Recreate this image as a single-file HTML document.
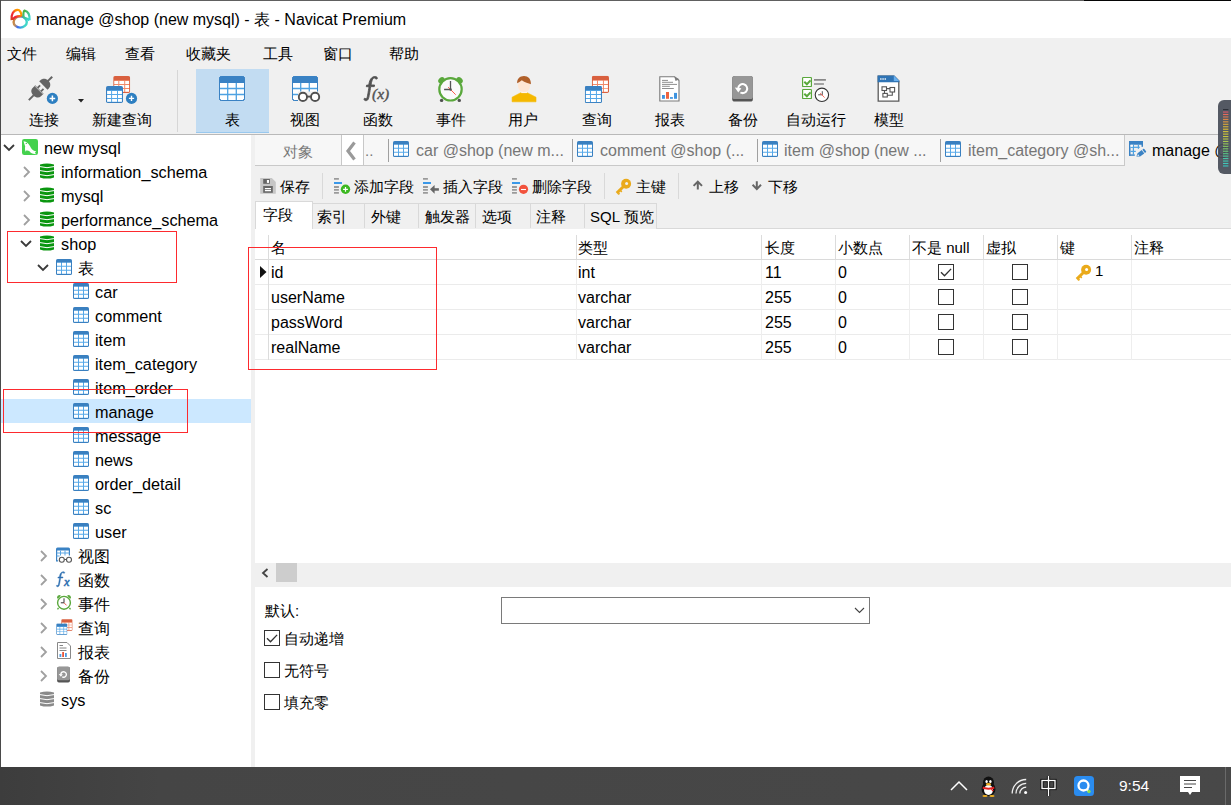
<!DOCTYPE html>
<html><head><meta charset="utf-8">
<style>
*{box-sizing:border-box;margin:0;padding:0}
html,body{width:1231px;height:805px;overflow:hidden;background:#f0f0f0;font-family:"Liberation Sans",sans-serif;font-size:16px;color:#000;position:relative}
.a{position:absolute;white-space:nowrap}
svg{position:absolute;overflow:visible}
.mi{position:absolute;top:43px;font-size:15px;line-height:20px}
.tl{position:absolute;top:109px;font-size:15px;line-height:20px;width:90px;text-align:center}
.tr{position:absolute;font-size:16.25px;line-height:22px;white-space:nowrap}
.t2{position:absolute;top:176px;font-size:15px;line-height:20px;white-space:nowrap}
.st{position:absolute;font-size:15px;line-height:20px;white-space:nowrap}
.gh{position:absolute;top:237px;font-size:15px;line-height:20px;white-space:nowrap}
.gc{position:absolute;font-size:16px;line-height:20px;white-space:nowrap}
.mi,.tl,.t2,.st,.gh,.gc{margin-top:1px}
.tr{margin-top:.5px}
.cb{position:absolute;width:16px;height:16px;border:1px solid #333;background:#fff}
</style></head><body>
<svg width="0" height="0" style="position:absolute">
<defs>
<symbol id="tbl" viewBox="0 0 26 25">
<rect x="0.5" y="0.5" width="25" height="24" rx="2" fill="#fff" stroke="#3a82c4"/>
<path d="M0.5 2.5a2 2 0 0 1 2-2h21a2 2 0 0 1 2 2V7H0.5z" fill="#3a82c4"/>
<path d="M8.7 7v17.5M17.3 7v17.5M0.5 12.5h25M0.5 18.5h25" stroke="#4ea2e2" stroke-width="1.3" fill="none"/>
<rect x="0.5" y="0.5" width="25" height="24" rx="2" fill="none" stroke="#3a82c4"/>
</symbol>
<symbol id="tblr" viewBox="0 0 26 25">
<rect x="0.5" y="0.5" width="25" height="24" rx="2" fill="#fff" stroke="#d9603f"/>
<path d="M0.5 2.5a2 2 0 0 1 2-2h21a2 2 0 0 1 2 2V7H0.5z" fill="#d9603f"/>
<path d="M8.7 7v17.5M17.3 7v17.5M0.5 12.5h25M0.5 18.5h25" stroke="#e5826a" stroke-width="1.3" fill="none"/>
<rect x="0.5" y="0.5" width="25" height="24" rx="2" fill="none" stroke="#d9603f"/>
</symbol>
<symbol id="tbs" viewBox="0 0 16 16">
<rect x="0" y="0" width="16" height="16" rx="1.6" fill="#3a80c0"/>
<rect x="1" y="3.6" width="14" height="11.3" fill="#56a8e8"/>
<path d="M1 3.7h4v3H1zM6 3.7h4v3H6zM11 3.7h4v3h-4zM1 7.8h4v3H1zM6 7.8h4v3H6zM11 7.8h4v3h-4zM1 11.8h4v3H1zM6 11.8h4v3H6zM11 11.8h4v3h-4z" fill="#fff"/>
</symbol>
<symbol id="tbm" viewBox="0 0 17 17">
<rect x="0" y="0" width="17" height="17" rx="1.8" fill="#3a80c0"/>
<rect x="1" y="4.2" width="15" height="11.8" fill="#56a8e8"/>
<path d="M1.1 5H5.1V8H1.1zM1.1 9H5.1V12H1.1zM1.1 12.9H5.1V15.8H1.1zM6.1 5H11V8H6.1zM6.1 9H11V12H6.1zM6.1 12.9H11V15.8H6.1zM12 5H15.9V8H12zM12 9H15.9V12H12zM12 12.9H15.9V15.8H12z" fill="#fff"/>
</symbol>
<symbol id="tbmr" viewBox="0 0 17 17">
<rect x="0" y="0" width="17" height="17" rx="1.8" fill="#d9603f"/>
<rect x="1" y="4.2" width="15" height="11.8" fill="#f08a6a"/>
<path d="M1.1 5H5.1V8H1.1zM1.1 9H5.1V12H1.1zM1.1 12.9H5.1V15.8H1.1zM6.1 5H11V8H6.1zM6.1 9H11V12H6.1zM6.1 12.9H11V15.8H6.1zM12 5H15.9V8H12zM12 9H15.9V12H12zM12 12.9H15.9V15.8H12z" fill="#fff"/>
</symbol>
<symbol id="db" viewBox="0 0 14 16">
<path d="M0 1.6Q7 -.8 14 1.6V14.4Q7 16.8 0 14.4z" fill="#0a960f"/>
<path d="M0 3.6Q7 5.8 14 3.6M0 7.6Q7 9.8 14 7.6M0 11.6Q7 13.8 14 11.6" fill="none" stroke="#fff" stroke-width="1"/>
</symbol>
</defs>
</svg>

<!-- title bar -->
<div class="a" style="left:0;top:0;width:1231px;height:38px;background:#fff"></div>
<div class="a" style="left:0;top:0;width:1084px;height:1px;background:#606060"></div>
<div class="a" style="left:1084px;top:0;width:147px;height:1px;background:#050505"></div>
<div class="a" style="left:0;top:0;width:1px;height:767px;background:#4a4a4a"></div>
<svg style="left:8px;top:7px" width="25" height="25" viewBox="0 0 25 25">
<defs>
<linearGradient id="lgL" x1="0" y1="1" x2="1" y2="0"><stop offset="0" stop-color="#d8401a"/><stop offset="0.35" stop-color="#f0203c"/><stop offset="0.7" stop-color="#ff8a00"/><stop offset="1" stop-color="#ffb000"/></linearGradient>
<linearGradient id="lgR" x1="0" y1="0" x2="0.6" y2="1"><stop offset="0" stop-color="#4aae3a"/><stop offset="1" stop-color="#3cd8d0"/></linearGradient>
<linearGradient id="lgB" x1="0" y1="0" x2="1" y2="0.3"><stop offset="0" stop-color="#d08030"/><stop offset="0.3" stop-color="#c09060"/><stop offset="0.55" stop-color="#3a6af8"/><stop offset="1" stop-color="#40d8c8"/></linearGradient>
</defs>
<ellipse cx="12.2" cy="15" rx="6.6" ry="5.6" fill="none" stroke="url(#lgB)" stroke-width="2.4"/>
<path d="M3.6 13.2C2.8 7.5 5.5 3 9.5 2.8c2.6-.1 3.8 2.5 4.2 6.6M13.6 9.2C9.5 8.8 6 10 4.4 12.8" fill="none" stroke="url(#lgL)" stroke-width="2.2" stroke-linejoin="round"/>
<path d="M15.6 10.8C15.2 6.5 15.8 4 16.6 3.6c3 .6 5.2 4 5 9.6M15.8 10.6c2.2.6 4.2 1.4 5.6 2.8" fill="none" stroke="url(#lgR)" stroke-width="2.2" stroke-linejoin="round"/>
</svg>
<div class="a" style="left:36px;top:9px;font-size:16px;line-height:22px">manage @shop (new mysql) - 表 - Navicat Premium</div>

<!-- menu -->
<div class="mi" style="left:7px">文件</div>
<div class="mi" style="left:66px">编辑</div>
<div class="mi" style="left:125px">查看</div>
<div class="mi" style="left:186px">收藏夹</div>
<div class="mi" style="left:263px">工具</div>
<div class="mi" style="left:323px">窗口</div>
<div class="mi" style="left:389px">帮助</div>

<!-- toolbar -->
<div class="a" style="left:196px;top:69px;width:73px;height:64px;background:#c2dcf2;border-bottom:1px solid #99c8ee"></div>
<div class="a" style="left:177px;top:70px;width:1px;height:62px;background:#d6d6d6"></div>
<div class="a" style="left:1px;top:134px;width:1230px;height:1px;background:#b9b9b9"></div>

<!-- connect icon -->
<svg style="left:24px;top:72px" width="40" height="36" viewBox="0 0 40 36">
<g transform="translate(17.4 15.5) rotate(-45)" fill="#646464">
<path d="M-2.8 -5.9V5.9H-6.5C-9.5 5.9 -11.2 3.5 -11.2 0S-9.5 -5.9 -6.5 -5.9z"/>
<rect x="-17.8" y="-1" width="7" height="2"/>
<rect x="-3" y="-3.3" width="3.6" height="1.8"/>
<rect x="-3" y="1.5" width="3.6" height="1.8"/>
<path d="M-3.6 -5.9v11.8" stroke="#f0f0f0" stroke-width="0.6"/>
<path d="M2.8 -5.9V5.9H4.5C7.5 5.9 9.8 3.5 9.8 0S7.5 -5.9 4.5 -5.9z"/>
<rect x="9" y="-1" width="6.3" height="2"/>
</g>
<circle cx="28.4" cy="26.4" r="5.6" fill="#2d7fc1"/>
<path d="M28.4 23.6v5.6M25.6 26.4h5.6" stroke="#fff" stroke-width="1.5"/>
</svg>
<svg style="left:78px;top:99px" width="6" height="4" viewBox="0 0 6 4"><path d="M0 0h6L3 3.5z" fill="#222"/></svg>

<!-- new query icon -->
<svg style="left:100px;top:72px" width="45" height="36" viewBox="0 0 45 36">
<use href="#tbmr" x="13.2" y="4" width="17" height="17"/>
<use href="#tbm" x="6" y="14" width="17" height="17"/>
<circle cx="31.5" cy="26.4" r="5.6" fill="#2d7fc1"/>
<path d="M31.5 23.8v5.2M28.9 26.4h5.2" stroke="#fff" stroke-width="1.4"/>
</svg>

<!-- table icon -->
<svg style="left:219px;top:76px" width="26" height="25"><use href="#tbl" width="26" height="25"/></svg>
<!-- view icon -->
<svg style="left:292px;top:76px" width="30" height="28" viewBox="0 0 30 28">
<use href="#tbl" width="26" height="25"/>
<rect x="6" y="15.5" width="23" height="12" fill="#f0f0f0"/>
<rect x="6" y="15.5" width="0" height="0" fill="#fff"/>
<circle cx="10.9" cy="20.9" r="4.1" fill="#fff" stroke="#505050" stroke-width="1.9"/>
<circle cx="23.1" cy="20.9" r="4.1" fill="#fff" stroke="#505050" stroke-width="1.9"/>
<path d="M15 20.6h4" stroke="#505050" stroke-width="1.9"/>
</svg>
<!-- function icon -->
<svg style="left:362px;top:75px" width="32" height="28" viewBox="0 0 32 28">
<path d="M2.5 25.2c1.3.9 3 .5 3.8-1.2.8-1.8 1.6-7 2.4-12.4h3.6l.3-1.6H9C9.6 6.8 10.3 4 11.5 3.2c.8-.5 1.4-.2 2 .5.7.6 1.8.4 1.9-.5.1-1-1.2-1.8-2.6-1.7-2.3.1-4.1 1.8-5 4.2-.5 1.2-.8 2.8-1.1 4.4H4.6l-.3 1.6h2.7C6.2 16.8 5.5 21.6 4.9 23c-.3.7-.8.9-1.3.6-.6-.5-1.6-.4-1.6.5 0 .3.2.8.5 1.1z" fill="#525252" stroke="#525252" stroke-width="0.9"/>
<text x="10" y="23.5" font-family="Liberation Serif" font-style="italic" font-size="15.5" fill="#525252" stroke="#525252" stroke-width="0.4">(x)</text>
</svg>
<!-- event clock -->
<svg style="left:434px;top:73px" width="32" height="32" viewBox="0 0 32 32">
<ellipse cx="7.4" cy="7.2" rx="3.6" ry="2.6" transform="rotate(-45 7.4 7.2)" fill="#5aa83c"/>
<ellipse cx="25.6" cy="7.2" rx="3.6" ry="2.6" transform="rotate(45 25.6 7.2)" fill="#5aa83c"/>
<circle cx="7.6" cy="27.4" r="1.7" fill="#505050"/>
<circle cx="25.3" cy="27.4" r="1.7" fill="#505050"/>
<circle cx="16.5" cy="16.3" r="11.2" fill="#fafafa" stroke="#5aa83c" stroke-width="2.2"/>
<path d="M16.5 8v8.5H10.1" stroke="#555" stroke-width="1.3" fill="none"/>
<path d="M14.1 14.1l7.6 7.6" stroke="#ff5a4a" stroke-width="1"/>
<circle cx="16.6" cy="16.5" r="1.2" fill="#555"/>
</svg>
<!-- user -->
<svg style="left:511px;top:75px" width="26" height="28" viewBox="0 0 26 28">
<path d="M1.1 22.2L9.8 17.7h6.3l8.9 4.5v4.6H1.1z" fill="#f5b800" stroke="#f5b800" stroke-width="0.6" stroke-linejoin="round"/>
<rect x="10.2" y="15.5" width="5.9" height="2.6" fill="#fff4ea"/>
<ellipse cx="13" cy="10.6" rx="6.1" ry="6.4" fill="#fee6d4"/>
<path d="M6.2 8.2C5.8 3.8 9 1 13 1s7.2 2.8 6.9 8.2C17.5 8.6 13.8 7.6 10.8 5.3 9.2 6.6 7.7 7.6 6.2 8.2z" fill="#b0602a"/>
</svg>
<!-- query -->
<svg style="left:584px;top:75px" width="26" height="29" viewBox="0 0 26 29">
<use href="#tbmr" x="7.8" y="0.8" width="17.2" height="17.2"/>
<use href="#tbm" x="0.8" y="10.9" width="17.2" height="17.2"/>
</svg>
<!-- report -->
<svg style="left:658px;top:75px" width="23" height="28" viewBox="0 0 23 28">
<path d="M1.8 1.7H16.6L21 5.6V26H1.8z" fill="#fff" stroke="#7a7a7a" stroke-width="1.1"/>
<path d="M16.2 1.4L21.4 4.2 17.6 5.9z" fill="#7a7a7a"/>
<path d="M4 5.4h6M4 7.3h11M4 9.4h15M4 11.3h7.8M4 13.5h11.8" stroke="#7a7a7a" stroke-width="0.85"/>
<rect x="4" y="20" width="2.9" height="3.8" fill="#3f94e0"/>
<rect x="8" y="17" width="3" height="6.8" fill="#ee6440"/>
<rect x="12" y="22.1" width="2.9" height="1.7" fill="#3f94e0"/>
<rect x="16" y="17.9" width="3" height="5.9" fill="#3f94e0"/>
</svg>
<!-- backup -->
<svg style="left:732px;top:75px" width="21" height="28" viewBox="0 0 21 28">
<rect x="0.2" y="1" width="20.7" height="25.6" rx="2.6" fill="#555"/>
<rect x="0.2" y="1" width="20.7" height="23" rx="2.6" fill="#979797"/>
<path d="M6.2 13A4.5 4.5 0 1 1 8.4 17.5" fill="none" stroke="#fff" stroke-width="2"/>
<path d="M2.8 12.6l6.6.6-3.1 4.2z" fill="#fff"/>
</svg>
<!-- automation -->
<svg style="left:802px;top:77px" width="28" height="27" viewBox="0 0 28 27">
<rect x=".6" y=".5" width="8.8" height="9" rx=".6" fill="#fff" stroke="#5aa83c" stroke-width="1.2"/>
<path d="M2.3 4.7l2.6 2.6 3.6-3.9" stroke="#5aa83c" stroke-width="2" fill="none"/>
<rect x=".6" y="12.5" width="8.8" height="9" rx=".6" fill="#fff" stroke="#5aa83c" stroke-width="1.2"/>
<path d="M2.3 16.7l2.6 2.6 3.6-3.9" stroke="#5aa83c" stroke-width="2" fill="none"/>
<path d="M12 2.9h11.9M12 7h9.9" stroke="#888" stroke-width="1.7"/>
<circle cx="19.9" cy="17.8" r="6.7" fill="#fff" stroke="#333" stroke-width="1.1"/>
<path d="M20.3 14.2v3.6H16.2" stroke="#444" stroke-width="0.9" fill="none"/>
<path d="M18.2 16.1l4.4 4.5" stroke="#ff5a4a" stroke-width="0.9"/>
</svg>
<!-- model -->
<svg style="left:877px;top:75px" width="23" height="28" viewBox="0 0 23 28">
<path d="M1.2 1.2h15.8l4.8 4.8v20.2H1.2z" fill="#fff" stroke="#5a5a5a" stroke-width="1.3"/>
<path d="M.6 .6h16.6l5.2 5.2V7.2H.6z" fill="#2f74b5"/>
<path d="M16.8 .6v5.4h5.4z" fill="#6ab0ee"/>
<path d="M3.2 4h1.3M5.4 4h1.3M7.6 4h1.3" stroke="#fff" stroke-width="1.3"/>
<rect x="5" y="11.8" width="4.5" height="3.7" fill="none" stroke="#555" stroke-width="1.1"/>
<rect x="13" y="12.5" width="4.6" height="4.5" fill="none" stroke="#555" stroke-width="1.1"/>
<rect x="5.9" y="18.4" width="4.4" height="3.6" fill="none" stroke="#555" stroke-width="1.1"/>
<path d="M9.5 13.6H13M15.3 17v3.2h-5M7.5 15.5v2.9" stroke="#555" stroke-width="1.1" fill="none"/>
</svg>

<div class="tl" style="left:-1px">连接</div>
<div class="tl" style="left:77px">新建查询</div>
<div class="tl" style="left:187px">表</div>
<div class="tl" style="left:260px">视图</div>
<div class="tl" style="left:333px">函数</div>
<div class="tl" style="left:406px">事件</div>
<div class="tl" style="left:478px">用户</div>
<div class="tl" style="left:552px">查询</div>
<div class="tl" style="left:625px">报表</div>
<div class="tl" style="left:698px">备份</div>
<div class="tl" style="left:771px">自动运行</div>
<div class="tl" style="left:844px">模型</div>
<!-- left panel -->
<div class="a" style="left:1px;top:135px;width:250px;height:632px;background:#fff"></div>
<div class="a" style="left:251px;top:135px;width:4px;height:632px;background:#f0f0f0"></div>
<div class="a" style="left:1px;top:399px;width:250px;height:24px;background:#cce8ff"></div>

<!-- chevrons -->
<svg style="left:3px;top:144px" width="12" height="8" viewBox="0 0 12 8"><path d="M1 1l5 5 5-5" fill="none" stroke="#3a3a3a" stroke-width="1.8"/></svg>
<svg style="left:23px;top:166px" width="8" height="12" viewBox="0 0 8 12"><path d="M1 1l5 5-5 5" fill="none" stroke="#a0a0a0" stroke-width="1.8"/></svg>
<svg style="left:23px;top:190px" width="8" height="12" viewBox="0 0 8 12"><path d="M1 1l5 5-5 5" fill="none" stroke="#a0a0a0" stroke-width="1.8"/></svg>
<svg style="left:23px;top:214px" width="8" height="12" viewBox="0 0 8 12"><path d="M1 1l5 5-5 5" fill="none" stroke="#a0a0a0" stroke-width="1.8"/></svg>
<svg style="left:20px;top:240px" width="12" height="8" viewBox="0 0 12 8"><path d="M1 1l5 5 5-5" fill="none" stroke="#3a3a3a" stroke-width="1.8"/></svg>
<svg style="left:37px;top:264px" width="12" height="8" viewBox="0 0 12 8"><path d="M1 1l5 5 5-5" fill="none" stroke="#3a3a3a" stroke-width="1.8"/></svg>
<svg style="left:40px;top:550px" width="8" height="12" viewBox="0 0 8 12"><path d="M1 1l5 5-5 5" fill="none" stroke="#a0a0a0" stroke-width="1.8"/></svg>
<svg style="left:40px;top:574px" width="8" height="12" viewBox="0 0 8 12"><path d="M1 1l5 5-5 5" fill="none" stroke="#a0a0a0" stroke-width="1.8"/></svg>
<svg style="left:40px;top:598px" width="8" height="12" viewBox="0 0 8 12"><path d="M1 1l5 5-5 5" fill="none" stroke="#a0a0a0" stroke-width="1.8"/></svg>
<svg style="left:40px;top:622px" width="8" height="12" viewBox="0 0 8 12"><path d="M1 1l5 5-5 5" fill="none" stroke="#a0a0a0" stroke-width="1.8"/></svg>
<svg style="left:40px;top:646px" width="8" height="12" viewBox="0 0 8 12"><path d="M1 1l5 5-5 5" fill="none" stroke="#a0a0a0" stroke-width="1.8"/></svg>
<svg style="left:40px;top:670px" width="8" height="12" viewBox="0 0 8 12"><path d="M1 1l5 5-5 5" fill="none" stroke="#a0a0a0" stroke-width="1.8"/></svg>

<!-- mysql conn icon -->
<svg style="left:22px;top:139px" width="16" height="16" viewBox="0 0 16 16">
<rect x="0" y="0" width="16" height="16" rx="2.2" fill="#44d14e"/>
<path d="M1.5 2.2C3 2.2 4.5 3 5.5 4 7 5 8 7 9 9c1 2 3 3 5.2 3.3L13 13.5l1 1.7c-2-.2-4-.7-5.5-1.7l-.7-1C6.5 11.5 5 11 3.8 11.8l-.3 1.2C3 11 2.8 9 3.2 7.5 2.5 5.5 2 4 1.5 2.2z" fill="#fff"/>
<circle cx="4.3" cy="4.4" r=".7" fill="#44d14e"/>
</svg>
<svg style="left:40px;top:163px" width="14" height="16"><use href="#db" width="14" height="16"/></svg>
<svg style="left:40px;top:187px" width="14" height="16"><use href="#db" width="14" height="16"/></svg>
<svg style="left:40px;top:211px" width="14" height="16"><use href="#db" width="14" height="16"/></svg>
<svg style="left:40px;top:235px" width="14" height="16"><use href="#db" width="14" height="16"/></svg>
<svg style="left:56px;top:259px" width="16" height="16"><use href="#tbs" width="16" height="16"/></svg>
<svg style="left:73px;top:283px" width="16" height="16"><use href="#tbs" width="16" height="16"/></svg>
<svg style="left:73px;top:307px" width="16" height="16"><use href="#tbs" width="16" height="16"/></svg>
<svg style="left:73px;top:331px" width="16" height="16"><use href="#tbs" width="16" height="16"/></svg>
<svg style="left:73px;top:355px" width="16" height="16"><use href="#tbs" width="16" height="16"/></svg>
<svg style="left:73px;top:379px" width="16" height="16"><use href="#tbs" width="16" height="16"/></svg>
<svg style="left:73px;top:403px" width="16" height="16"><use href="#tbs" width="16" height="16"/></svg>
<svg style="left:73px;top:427px" width="16" height="16"><use href="#tbs" width="16" height="16"/></svg>
<svg style="left:73px;top:451px" width="16" height="16"><use href="#tbs" width="16" height="16"/></svg>
<svg style="left:73px;top:475px" width="16" height="16"><use href="#tbs" width="16" height="16"/></svg>
<svg style="left:73px;top:499px" width="16" height="16"><use href="#tbs" width="16" height="16"/></svg>
<svg style="left:73px;top:523px" width="16" height="16"><use href="#tbs" width="16" height="16"/></svg>
<!-- 视图 small -->
<svg style="left:52px;top:544px" width="24" height="24" viewBox="0 0 24 24">
<rect x="4.5" y="3.2" width="13.5" height="12.8" fill="#fff"/>
<path d="M4 5a1.5 1.5 0 0 1 1.5-1.5h11A1.5 1.5 0 0 1 18 5v1.5H4z" fill="#3a82c4"/>
<path d="M4.6 6v10.8h1.5M17.4 6v5.5" stroke="#3a82c4" stroke-width="1.2" fill="none"/>
<path d="M8.5 6.5v5M13 6.5v5M4.6 9h12.8M4.6 12h3" stroke="#5aa6e4" stroke-width="1" fill="none"/>
<circle cx="9.8" cy="15.8" r="2.5" fill="#fff" stroke="#555" stroke-width="1.1"/>
<circle cx="17" cy="15.8" r="2.5" fill="#fff" stroke="#555" stroke-width="1.1"/>
<path d="M12.3 15.5h2.2" stroke="#555" stroke-width="1"/>
</svg>
<svg style="left:52px;top:568px" width="24" height="24" viewBox="0 0 24 24">
<g transform="translate(3.2 2.8) scale(0.62)">
<path d="M2.5 25.2c1.3.9 3 .5 3.8-1.2.8-1.8 1.6-7 2.4-12.4h3.6l.3-1.6H9C9.6 6.8 10.3 4 11.5 3.2c.8-.5 1.4-.2 2 .5.7.6 1.8.4 1.9-.5.1-1-1.2-1.8-2.6-1.7-2.3.1-4.1 1.8-5 4.2-.5 1.2-.8 2.8-1.1 4.4H4.6l-.3 1.6h2.7C6.2 16.8 5.5 21.6 4.9 23c-.3.7-.8.9-1.3.6-.6-.5-1.6-.4-1.6.5 0 .3.2.8.5 1.1z" fill="#2f70b2" stroke="#2f70b2" stroke-width="0.8"/>
</g>
<text x="12" y="18.2" font-family="Liberation Serif" font-style="italic" font-size="12.5" fill="#2f70b2" stroke="#2f70b2" stroke-width="0.5">x</text>
</svg>
<svg style="left:56px;top:594px" width="16" height="17" viewBox="0 0 16 17">
<path d="M1 4a3 3 0 0 1 3-3l.8.8-3 3z" fill="#5aa83c"/>
<path d="M15 4a3 3 0 0 0-3-3l-.8.8 3 3z" fill="#5aa83c"/>
<circle cx="8" cy="8.8" r="6.4" fill="#fff" stroke="#5aa83c" stroke-width="1.4"/>
<path d="M2.5 14l-1 1.4M13.5 14l1 1.4" stroke="#5aa83c" stroke-width="1.3"/>
<path d="M8 4.3v4.5H4.8" stroke="#333" stroke-width="1" fill="none"/><path d="M8 8.8l2.6 2.6" stroke="#e84a3a" stroke-width="0.9"/>
</svg>
<svg style="left:56px;top:618px" width="17" height="18" viewBox="0 0 17 18">
<use href="#tbmr" x="5.2" y="1" width="11.4" height="12"/>
<use href="#tbm" x="0.2" y="5.2" width="11.2" height="12"/>
</svg>
<svg style="left:57px;top:642px" width="14" height="17" viewBox="0 0 14 17">
<path d="M.5 .5h9.5l3.5 3.5v12.5H.5z" fill="#fff" stroke="#888" stroke-width="1"/>
<path d="M2.5 3.5h3.5M2.5 6h7M2.5 8.5h7" stroke="#777" stroke-width=".9"/>
<rect x="2.5" y="12" width="1.8" height="3" fill="#4a9ae0"/>
<rect x="5.2" y="10" width="1.8" height="5" fill="#e8553a"/>
<rect x="8" y="11" width="1.8" height="4" fill="#4a9ae0"/>
</svg>
<svg style="left:57px;top:666px" width="13" height="17.5" viewBox="0 0 21 28">
<rect x="0.2" y="1" width="20.7" height="25.6" rx="2.8" fill="#555"/>
<rect x="0.2" y="1" width="20.7" height="22" rx="2.8" fill="#979797"/>
<path d="M6.2 13A4.5 4.5 0 1 1 8.4 17.5" fill="none" stroke="#fff" stroke-width="2.2"/>
<path d="M2.8 12.6l6.6.6-3.1 4.2z" fill="#fff"/>
</svg>
<svg style="left:40px;top:691px" width="14" height="16" viewBox="0 0 14 16">
<path d="M0 1.6Q7 -.8 14 1.6V14.4Q7 16.8 0 14.4z" fill="#8a8a8a"/>
<path d="M0 3.6Q7 5.8 14 3.6M0 7.6Q7 9.8 14 7.6M0 11.6Q7 13.8 14 11.6" fill="none" stroke="#fff" stroke-width="1"/>
</svg>

<div class="tr" style="left:44px;top:136px">new mysql</div>
<div class="tr" style="left:61px;top:160px">information_schema</div>
<div class="tr" style="left:61px;top:184px">mysql</div>
<div class="tr" style="left:61px;top:208px">performance_schema</div>
<div class="tr" style="left:61px;top:232px">shop</div>
<div class="tr" style="left:78px;top:256px">表</div>
<div class="tr" style="left:95px;top:280px">car</div>
<div class="tr" style="left:95px;top:304px">comment</div>
<div class="tr" style="left:95px;top:328px">item</div>
<div class="tr" style="left:95px;top:352px">item_category</div>
<div class="tr" style="left:95px;top:376px">item_order</div>
<div class="tr" style="left:95px;top:400px">manage</div>
<div class="tr" style="left:95px;top:424px">message</div>
<div class="tr" style="left:95px;top:448px">news</div>
<div class="tr" style="left:95px;top:472px">order_detail</div>
<div class="tr" style="left:95px;top:496px">sc</div>
<div class="tr" style="left:95px;top:520px">user</div>
<div class="tr" style="left:78px;top:544px">视图</div>
<div class="tr" style="left:78px;top:568px">函数</div>
<div class="tr" style="left:78px;top:592px">事件</div>
<div class="tr" style="left:78px;top:616px">查询</div>
<div class="tr" style="left:78px;top:640px">报表</div>
<div class="tr" style="left:78px;top:664px">备份</div>
<div class="tr" style="left:61px;top:688px">sys</div>

<!-- red rectangles -->
<div class="a" style="left:7px;top:231px;width:170px;height:52px;border:1px solid #fd2a2e"></div>
<div class="a" style="left:3px;top:389px;width:185px;height:44px;border:1px solid #fd2a2e"></div>
<!-- tab bar -->
<div class="a" style="left:255px;top:135px;width:870px;height:31px;background:#f7f7f7;border-bottom:1px solid #c9c9c9"></div>
<div class="a" style="left:341px;top:135px;width:23px;height:30px;background:#fff;border-left:1px solid #c8c8c8;border-right:1px solid #c8c8c8"></div>
<div class="a" style="left:1124px;top:135px;width:1px;height:31px;background:#c9c9c9"></div>
<div class="st" style="left:283px;top:141px;color:#777">对象</div>
<svg style="left:344px;top:140px" width="14" height="22" viewBox="0 0 14 22"><path d="M10.5 2.5L4 11l6.5 8.5" fill="none" stroke="#9a9a9a" stroke-width="3.2"/></svg>
<div class="st" style="left:365px;top:140px;color:#777">..</div>
<div class="a" style="left:388px;top:139px;width:1px;height:23px;background:#a0a0a0"></div>
<div class="a" style="left:572px;top:139px;width:1px;height:23px;background:#a0a0a0"></div>
<div class="a" style="left:757px;top:139px;width:1px;height:23px;background:#a0a0a0"></div>
<div class="a" style="left:940px;top:139px;width:1px;height:23px;background:#a0a0a0"></div>
<svg style="left:393px;top:141px" width="16" height="16"><use href="#tbs" width="16" height="16"/></svg>
<svg style="left:577px;top:141px" width="16" height="16"><use href="#tbs" width="16" height="16"/></svg>
<svg style="left:762px;top:141px" width="16" height="16"><use href="#tbs" width="16" height="16"/></svg>
<svg style="left:945px;top:141px" width="16" height="16"><use href="#tbs" width="16" height="16"/></svg>
<div class="tr" style="left:416px;top:139px;color:#767676;font-size:16px">car @shop (new m...</div>
<div class="tr" style="left:600px;top:139px;color:#767676;font-size:16px">comment @shop (...</div>
<div class="tr" style="left:784px;top:139px;color:#767676;font-size:16px">item @shop (new ...</div>
<div class="tr" style="left:968px;top:139px;color:#767676;font-size:16px">item_category @sh...</div>
<svg style="left:1126px;top:138px" width="22" height="22" viewBox="0 0 22 22">
<g fill="#3a82c4">
<rect x="3" y="3" width="14" height="3.8" rx=".8"/>
<rect x="3" y="3" width="1.5" height="14.8"/>
<rect x="3" y="16.4" width="5.8" height="1.4"/>
<rect x="15.5" y="3" width="1.5" height="5.8"/>
</g>
<g fill="#4ea2e2">
<rect x="6.8" y="6.8" width="1.2" height="10"/>
<rect x="11.8" y="6.8" width="1.2" height="4"/>
<rect x="4.5" y="8.7" width="9.3" height="1.2"/>
<rect x="4.5" y="12.8" width="5.3" height="1.2"/>
</g>
<rect x="4.5" y="6.8" width="2.3" height="1.9" fill="#fff"/>
<g transform="translate(10.4 18.6) rotate(-36.5)">
<path d="M0 0L3 -2.1H8.2V2.1H3z" fill="#3a82c4"/>
<path d="M1.2 0L2.8 -1V1z" fill="#fff"/>
<rect x="8.9" y="-2.1" width="2" height="4.2" rx=".6" fill="#3a82c4"/>
</g>
</svg>
<div class="tr" style="left:1152px;top:139px;font-size:16px">manage @shop</div>
<!-- volume meter widget -->
<div class="a" style="left:1218px;top:100px;width:16px;height:74px;background:rgba(72,77,88,0.93);border-radius:6px 0 0 6px"></div>
<svg style="left:1223px;top:109px" width="6" height="60" viewBox="0 0 6 60">
<g stroke-width="1.1"><path d="M0 0.60h5.4" stroke="#2a2e36"/><path d="M0 3.05h5.4" stroke="#e05a6a"/><path d="M0 5.50h5.4" stroke="#e86a5a"/><path d="M0 7.95h5.4" stroke="#e07a50"/><path d="M0 10.40h5.4" stroke="#e08a48"/><path d="M0 12.85h5.4" stroke="#e09a40"/><path d="M0 15.30h5.4" stroke="#d8a838"/><path d="M0 17.75h5.4" stroke="#d8b438"/><path d="M0 20.20h5.4" stroke="#e0c030"/><path d="M0 22.65h5.4" stroke="#d8c838"/><path d="M0 25.10h5.4" stroke="#d0c838"/><path d="M0 27.55h5.4" stroke="#c8c840"/><path d="M0 30.00h5.4" stroke="#b8c848"/><path d="M0 32.45h5.4" stroke="#a8c850"/><path d="M0 34.90h5.4" stroke="#98c858"/><path d="M0 37.35h5.4" stroke="#88c860"/><path d="M0 39.80h5.4" stroke="#78c868"/><path d="M0 42.25h5.4" stroke="#68c878"/><path d="M0 44.70h5.4" stroke="#58c888"/><path d="M0 47.15h5.4" stroke="#50c898"/><path d="M0 49.60h5.4" stroke="#48c8a8"/><path d="M0 52.05h5.4" stroke="#40c8b0"/><path d="M0 54.50h5.4" stroke="#40c8b8"/><path d="M0 56.95h5.4" stroke="#38c8c0"/></g>
</svg>

<!-- toolbar 2 -->
<svg style="left:256px;top:174px" width="25" height="24" viewBox="0 0 25 24">
<path d="M4.2 4H15.8L19.8 8V19.8H4.2z" fill="#c6c6c6"/>
<rect x="7.2" y="5" width="6.7" height="4.8" fill="#666"/>
<rect x="10.9" y="6" width="2.1" height="2.9" fill="#fff"/>
<rect x="7.2" y="12" width="9.6" height="6.8" fill="#666"/>
<path d="M8.9 14.6h6.1M8.9 16.7h6.1" stroke="#fff" stroke-width="1.2"/>
</svg>
<div class="t2" style="left:280px">保存</div>
<div class="a" style="left:322px;top:173px;width:1px;height:26px;background:#d9d9d9"></div>
<svg style="left:330px;top:174px" width="25" height="24" viewBox="0 0 25 24">
<path d="M4 4.9h4.9M4 13h4.9M4 15.9h4.9M4 18.9h4.9" stroke="#9a9a9a" stroke-width="1.8"/><path d="M4 9h8" stroke="#3a98e8" stroke-width="2"/>
<circle cx="15.5" cy="15.3" r="4.7" fill="#3cb820"/>
<path d="M15.5 12.9v4.8M13.1 15.3h4.8" stroke="#fff" stroke-width="1.2"/>
</svg>
<div class="t2" style="left:354px">添加字段</div>
<svg style="left:420px;top:174px" width="25" height="24" viewBox="0 0 25 24">
<path d="M3 4.9h4.9M3 13h4.9M3 15.9h4.9M3 18.9h4.9" stroke="#9a9a9a" stroke-width="1.8"/><path d="M3 9h8" stroke="#3a98e8" stroke-width="2"/>
<path d="M10 15.3L14.6 11V19.8z" fill="#666"/>
<rect x="14" y="14.2" width="4.9" height="2.5" fill="#666"/>
</svg>
<div class="t2" style="left:443px">插入字段</div>
<svg style="left:509px;top:174px" width="25" height="24" viewBox="0 0 25 24">
<path d="M3 4.9h4.9M3 13h4.9M3 15.9h4.9M3 18.9h4.9" stroke="#9a9a9a" stroke-width="1.8"/><path d="M3 9h8" stroke="#3a98e8" stroke-width="2"/>
<circle cx="14.5" cy="15.3" r="4.6" fill="#f2523c"/>
<path d="M12 15.5h5" stroke="#fff" stroke-width="1.1"/>
</svg>
<div class="t2" style="left:532px">删除字段</div>
<div class="a" style="left:604px;top:173px;width:1px;height:26px;background:#d9d9d9"></div>
<svg style="left:613px;top:174px" width="25" height="24" viewBox="0 0 25 24">
<g transform="translate(13.1 9.8) rotate(135)" fill="#eaaa1a"><rect x="3" y="-1.45" width="10.2" height="2.9"/><rect x="8" y="-2.7" width="1.6" height="1.5"/><rect x="11.2" y="-2.7" width="2" height="1.5"/></g>
<circle cx="13.1" cy="9.8" r="5" fill="#eaaa1a"/>
<circle cx="13.6" cy="9.4" r="1.5" fill="#f0f0f0"/>
</svg>
<div class="t2" style="left:636px">主键</div>
<div class="a" style="left:678px;top:173px;width:1px;height:26px;background:#d9d9d9"></div>
<svg style="left:688px;top:174px" width="25" height="24" viewBox="0 0 25 24"><path d="M9.8 15.5V7.6M5.6 11.9l4.2-4.3 4.2 4.3" stroke="#666" stroke-width="2" fill="none"/></svg>
<div class="t2" style="left:709px">上移</div>
<svg style="left:747px;top:174px" width="25" height="24" viewBox="0 0 25 24"><path d="M9.8 7.2v7.9M5.6 10.8l4.2 4.3 4.2-4.3" stroke="#666" stroke-width="2" fill="none"/></svg>
<div class="t2" style="left:768px">下移</div>

<!-- sub tabs -->
<div class="a" style="left:255px;top:228px;width:976px;height:1px;background:#d9d9d9"></div>
<div class="a" style="left:312px;top:203px;width:345px;height:26px;background:#f0f0f0;border:1px solid #d9d9d9;border-bottom:none"></div>
<div class="a" style="left:364px;top:203px;width:1px;height:25px;background:#d9d9d9"></div>
<div class="a" style="left:418px;top:203px;width:1px;height:25px;background:#d9d9d9"></div>
<div class="a" style="left:475px;top:203px;width:1px;height:25px;background:#d9d9d9"></div>
<div class="a" style="left:530px;top:203px;width:1px;height:25px;background:#d9d9d9"></div>
<div class="a" style="left:584px;top:203px;width:1px;height:25px;background:#d9d9d9"></div>
<div class="a" style="left:255px;top:201px;width:58px;height:29px;background:#fff;border:1px solid #d9d9d9;border-bottom:none"></div>
<div class="st" style="left:263px;top:204px">字段</div>
<div class="st" style="left:317px;top:206px">索引</div>
<div class="st" style="left:371px;top:206px">外键</div>
<div class="st" style="left:425px;top:206px">触发器</div>
<div class="st" style="left:482px;top:206px">选项</div>
<div class="st" style="left:536px;top:206px">注释</div>
<div class="st" style="left:590px;top:206px">SQL 预览</div>

<!-- grid -->
<div class="a" style="left:255px;top:229px;width:976px;height:334px;background:#fff"></div>
<div class="a" style="left:255px;top:259px;width:976px;height:1px;background:#dadada"></div>
<div class="a" style="left:255px;top:284px;width:976px;height:1px;background:#ebebeb"></div>
<div class="a" style="left:255px;top:309px;width:976px;height:1px;background:#ebebeb"></div>
<div class="a" style="left:255px;top:334px;width:976px;height:1px;background:#ebebeb"></div>
<div class="a" style="left:255px;top:359px;width:976px;height:1px;background:#ebebeb"></div>
<div class="a" style="left:268px;top:235px;width:1px;height:125px;background:#dcdcdc"></div>
<div class="a" style="left:576px;top:235px;width:1px;height:24px;background:#dcdcdc"></div>
<div class="a" style="left:576px;top:260px;width:1px;height:100px;background:#eeeeee"></div>
<div class="a" style="left:761px;top:235px;width:1px;height:24px;background:#dcdcdc"></div>
<div class="a" style="left:761px;top:260px;width:1px;height:100px;background:#eeeeee"></div>
<div class="a" style="left:835px;top:235px;width:1px;height:24px;background:#dcdcdc"></div>
<div class="a" style="left:835px;top:260px;width:1px;height:100px;background:#eeeeee"></div>
<div class="a" style="left:909px;top:235px;width:1px;height:24px;background:#dcdcdc"></div>
<div class="a" style="left:909px;top:260px;width:1px;height:100px;background:#eeeeee"></div>
<div class="a" style="left:983px;top:235px;width:1px;height:24px;background:#dcdcdc"></div>
<div class="a" style="left:983px;top:260px;width:1px;height:100px;background:#eeeeee"></div>
<div class="a" style="left:1057px;top:235px;width:1px;height:24px;background:#dcdcdc"></div>
<div class="a" style="left:1057px;top:260px;width:1px;height:100px;background:#eeeeee"></div>
<div class="a" style="left:1131px;top:235px;width:1px;height:24px;background:#dcdcdc"></div>
<div class="a" style="left:1131px;top:260px;width:1px;height:100px;background:#eeeeee"></div>
<div class="gh" style="left:271px">名</div>
<div class="gh" style="left:578px">类型</div>
<div class="gh" style="left:765px">长度</div>
<div class="gh" style="left:838px">小数点</div>
<div class="gh" style="left:912px">不是 null</div>
<div class="gh" style="left:986px">虚拟</div>
<div class="gh" style="left:1060px">键</div>
<div class="gh" style="left:1134px">注释</div>
<svg style="left:260px;top:266px" width="7" height="12" viewBox="0 0 7 12"><path d="M0 0l6.5 6L0 12z" fill="#111"/></svg>
<div class="gc" style="left:271px;top:262px">id</div>
<div class="gc" style="left:271px;top:287px">userName</div>
<div class="gc" style="left:271px;top:312px">passWord</div>
<div class="gc" style="left:271px;top:337px">realName</div>
<div class="gc" style="left:578px;top:262px">int</div>
<div class="gc" style="left:578px;top:287px">varchar</div>
<div class="gc" style="left:578px;top:312px">varchar</div>
<div class="gc" style="left:578px;top:337px">varchar</div>
<div class="gc" style="left:765px;top:262px">11</div>
<div class="gc" style="left:765px;top:287px">255</div>
<div class="gc" style="left:765px;top:312px">255</div>
<div class="gc" style="left:765px;top:337px">255</div>
<div class="gc" style="left:838px;top:262px">0</div>
<div class="gc" style="left:838px;top:287px">0</div>
<div class="gc" style="left:838px;top:312px">0</div>
<div class="gc" style="left:838px;top:337px">0</div>
<div class="cb" style="left:938px;top:264px"></div>
<svg style="left:941px;top:268px" width="11" height="9" viewBox="0 0 11 9"><path d="M0 4.3l3.5 3.5L10.1 .9" fill="none" stroke="#333" stroke-width="1.35"/></svg>
<div class="cb" style="left:938px;top:289px"></div>
<div class="cb" style="left:938px;top:314px"></div>
<div class="cb" style="left:938px;top:339px"></div>
<div class="cb" style="left:1012px;top:264px"></div>
<div class="cb" style="left:1012px;top:289px"></div>
<div class="cb" style="left:1012px;top:314px"></div>
<div class="cb" style="left:1012px;top:339px"></div>
<svg style="left:1073px;top:260px" width="25" height="24" viewBox="0 0 25 24">
<g transform="translate(13.1 9.8) rotate(135)" fill="#eaaa1a"><rect x="3" y="-1.45" width="10.2" height="2.9"/><rect x="8" y="-2.7" width="1.6" height="1.5"/><rect x="11.2" y="-2.7" width="2" height="1.5"/></g>
<circle cx="13.1" cy="9.8" r="5" fill="#eaaa1a"/>
<circle cx="13.6" cy="9.4" r="1.5" fill="#fff"/>
</svg>
<div class="gc" style="left:1095px;top:260px;font-size:15px">1</div>
<!-- red rectangle grid -->
<div class="a" style="left:248px;top:247px;width:189px;height:123px;border:1px solid #fd2a2e"></div>

<!-- horizontal scrollbar -->
<div class="a" style="left:255px;top:563px;width:976px;height:24px;background:#f0f0f0"></div>
<div class="a" style="left:276px;top:563px;width:21px;height:19px;background:#cdcdcd"></div>
<svg style="left:261px;top:568px" width="8" height="10" viewBox="0 0 8 10"><path d="M6.5 1L2 5l4.5 4" fill="none" stroke="#444" stroke-width="1.8"/></svg>

<!-- form -->
<div class="a" style="left:255px;top:587px;width:976px;height:180px;background:#fff"></div>
<div class="st" style="left:265px;top:600px;font-size:15px">默认:</div>
<div class="a" style="left:501px;top:597px;width:369px;height:27px;border:1px solid #7a7a7a;background:#fff"></div>
<svg style="left:854px;top:607px" width="11" height="7" viewBox="0 0 11 7"><path d="M1 1l4.5 4.5L10 1" fill="none" stroke="#444" stroke-width="1.1"/></svg>
<div class="cb" style="left:264px;top:630px"></div>
<svg style="left:267px;top:634px" width="11" height="9" viewBox="0 0 11 9"><path d="M0 4.3l3.5 3.5L10.1 .9" fill="none" stroke="#333" stroke-width="1.35"/></svg>
<div class="st" style="left:284px;top:628px;font-size:15px">自动递增</div>
<div class="cb" style="left:264px;top:662px"></div>
<div class="st" style="left:284px;top:660px;font-size:15px">无符号</div>
<div class="cb" style="left:264px;top:694px"></div>
<div class="st" style="left:284px;top:692px;font-size:15px">填充零</div>

<!-- taskbar -->
<div class="a" style="left:0;top:767px;width:1231px;height:38px;background:linear-gradient(to right,#3d3d3d 0,#454545 160px,#484848 100%)"></div>
<div class="a" style="left:1225px;top:767px;width:1px;height:38px;background:#6a6a6a"></div>
<svg style="left:950px;top:780px" width="18" height="11" viewBox="0 0 18 11"><path d="M1 10l8-8 8 8" fill="none" stroke="#fff" stroke-width="1.5"/></svg>
<svg style="left:980px;top:776px" width="17" height="21" viewBox="0 0 17 21">
<ellipse cx="8.5" cy="13" rx="7" ry="7" fill="#111"/>
<ellipse cx="8.5" cy="6.5" rx="5.5" ry="6" fill="#111"/>
<ellipse cx="8.5" cy="14" rx="4.5" ry="5" fill="#fff"/>
<path d="M3 10.5c2 1.5 9 1.5 11 0l.5 2c-2 1.5-10 1.5-12 0z" fill="#e02020"/>
<path d="M10 12l2.5 3.5 1.5-1z" fill="#e02020"/>
<ellipse cx="6.6" cy="5.5" rx="1.2" ry="1.6" fill="#fff"/>
<ellipse cx="10.4" cy="5.5" rx="1.2" ry="1.6" fill="#fff"/>
<ellipse cx="8.5" cy="8.3" rx="2.6" ry="1.2" fill="#f2b020"/>
<ellipse cx="5" cy="20" rx="2.6" ry="1" fill="#f2b020"/>
<ellipse cx="12" cy="20" rx="2.6" ry="1" fill="#f2b020"/>
</svg>
<svg style="left:1010px;top:777px" width="20" height="20" viewBox="0 0 20 20">
<g fill="none" stroke="#eee" stroke-width="1.3">
<path d="M2.2 16.5A14 14 0 0 1 16.2 2.5"/>
<path d="M6 16.5A10.2 10.2 0 0 1 16.2 6.3"/>
<path d="M9.8 16.5A6.4 6.4 0 0 1 16.2 10.1"/>
</g>
<circle cx="15.6" cy="15.4" r="1.5" fill="#fff"/>
</svg>
<svg style="left:1039px;top:775px" width="20" height="22" viewBox="0 0 20 22">
<g fill="none" stroke="#111" stroke-width="3.2"><rect x="3" y="5.5" width="13" height="8"/><path d="M9.5 1v20"/></g>
<g fill="none" stroke="#fff" stroke-width="1.3"><rect x="3" y="5.5" width="13" height="8"/><path d="M9.5 1v20"/></g>
</svg>
<svg style="left:1074px;top:776px" width="20" height="20" viewBox="0 0 20 20">
<rect width="20" height="20" rx="3.5" fill="#2a8cf0"/>
<circle cx="9.5" cy="9.5" r="5" fill="none" stroke="#fff" stroke-width="2.3"/>
<path d="M12.5 13l2.5 2.5" stroke="#fff" stroke-width="2.3"/>
<circle cx="15" cy="15.5" r="1.7" fill="#8ee04a"/>
</svg>
<div class="a" style="left:1119px;top:776px;font-size:15.5px;line-height:20px;color:#fff">9:54</div>
<svg style="left:1180px;top:776px" width="21" height="21" viewBox="0 0 21 21">
<path d="M0 0h20v16h-8l-2 3-2-3H0z" fill="#fff"/>
<path d="M4 4.5h12M4 8h12M4 11.5h8" stroke="#474747" stroke-width="1.2"/>
</svg>
</body></html>
